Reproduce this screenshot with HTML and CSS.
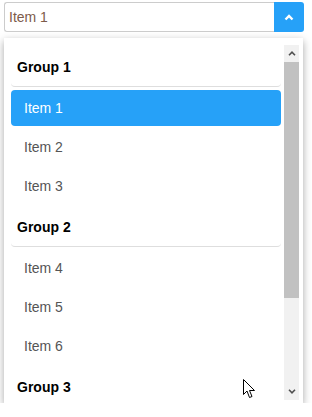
FILE: index.html
```html
<!DOCTYPE html>
<html lang="en">
<head>
    <meta charset="UTF-8">
    <title>Grouped Select</title>
    <link rel="stylesheet" href="styles.css">
</head>
<body>
    <div class="select">
        <div class="select-control">
            <div class="select-value">Item 1</div>
            <div class="select-toggle">
                <svg width="10" height="7" viewBox="0 0 10 7"><path d="M1.5 5.5 L5 2 L8.5 5.5" fill="none" stroke="#fff" stroke-width="2.4"/></svg>
            </div>
        </div>
        <div class="select-panel">
            <div class="select-list">
                <div class="group-title">Group 1</div>
                <div class="option selected">Item 1</div>
                <div class="option">Item 2</div>
                <div class="option">Item 3</div>
                <div class="group-title">Group 2</div>
                <div class="option">Item 4</div>
                <div class="option">Item 5</div>
                <div class="option">Item 6</div>
                <div class="group-title">Group 3</div>
            </div>
            <div class="scrollbar">
                <div class="scroll-btn">
                    <svg width="8" height="5" viewBox="0 0 8 5"><path d="M1 4.2 L4 1.2 L7 4.2" fill="none" stroke="#505050" stroke-width="1.6"/></svg>
                </div>
                <div class="scroll-track">
                    <div class="scroll-thumb"></div>
                </div>
                <div class="scroll-btn">
                    <svg width="8" height="5" viewBox="0 0 8 5"><path d="M1 0.8 L4 3.8 L7 0.8" fill="none" stroke="#505050" stroke-width="1.6"/></svg>
                </div>
            </div>
        </div>
    </div>
    <svg class="cursor" width="13" height="20" viewBox="0 0 13 20">
        <path d="M0.5 0.5 L0.5 15.5 L4 12 L6.5 18.5 L9 17.5 L6.5 11.5 L11.5 11.5 Z" fill="#fff" stroke="#000" stroke-width="1"/>
    </svg>
</body>
</html>
```

FILE: styles.css
```css
body {
    margin: 0;
    padding: 2px 8px 0 4px;
    font-family: "Liberation Sans", Arial, sans-serif;
    font-size: 14px;
    background: #fff;
}

.select {
    width: 300px;
}

.select-control {
    display: flex;
    height: 30px;
}

.select-value {
    flex: 1;
    display: flex;
    align-items: center;
    padding-left: 4px;
    border: 1px solid #ccc;
    border-right: none;
    border-radius: 3px 0 0 3px;
    color: #7d5b4a;
}

.select-toggle {
    width: 30px;
    display: flex;
    align-items: center;
    justify-content: center;
    background: #26a1f8;
    border-radius: 0 3px 3px 0;
}

.select-panel {
    margin-top: 6px;
    width: 299px;
    box-sizing: border-box;
    display: flex;
    padding: 7px 4px 3px 5px;
    background: #fff;
    box-shadow: 0 3px 8px rgba(0, 0, 0, 0.35);
}

.select-list {
    flex: 1;
    height: 355px;
    overflow: hidden;
    padding: 2px 3px 0 2px;
    box-sizing: border-box;
}

.group-title {
    height: 39px;
    display: flex;
    align-items: center;
    padding-left: 6px;
    font-weight: bold;
    color: #000;
    border-bottom: 1px solid #dedede;
    border-radius: 0 0 4px 4px;
    margin-bottom: 3px;
    flex-shrink: 0;
}

.option + .group-title {
    margin-top: 3px;
}

.option {
    height: 36px;
    display: flex;
    align-items: center;
    padding-left: 13px;
    color: #555;
    border-radius: 4px;
}

.option + .option {
    margin-top: 3px;
}

.option.selected {
    background: #26a1f8;
    color: #fff;
}

.scrollbar {
    width: 15px;
    height: 355px;
    display: flex;
    flex-direction: column;
    background: #f1f1f1;
}

.scroll-btn {
    height: 17px;
    display: flex;
    align-items: center;
    justify-content: center;
}

.scroll-track {
    flex: 1;
}

.scroll-thumb {
    height: 236px;
    background: #c1c1c1;
}

.cursor {
    position: absolute;
    left: 243px;
    top: 379px;
}
```
